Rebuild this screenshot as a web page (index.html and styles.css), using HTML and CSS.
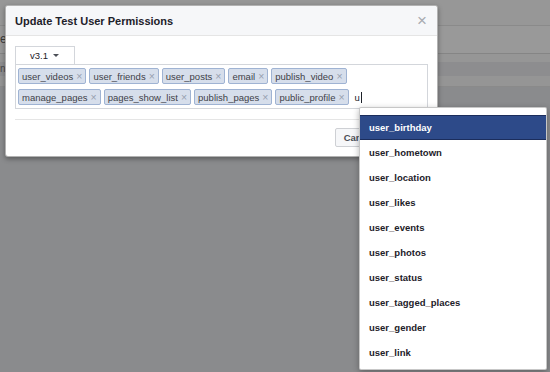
FILE: index.html
```html
<!DOCTYPE html>
<html>
<head>
<meta charset="utf-8">
<link rel="stylesheet" href="styles.css">
</head>
<body>
<div class="page">
  <div class="band b1"></div>
  <div class="band b2"><span class="peek">e</span></div>
  <div class="band b3"></div>
  <div class="band b4"><span class="peek small">n</span></div>
  <div class="band b5"></div>
  <div class="rest"></div>
</div>

<div class="dialog">
  <div class="dlg-head">
    <span class="title">Update Test User Permissions</span>
    <span class="close">×</span>
  </div>
  <div class="dlg-body">
    <div class="tabs"><div class="tab">v3.1<span class="caret"></span></div></div>
    <div class="tokenbox">
      <span class="tok">user_videos<span class="x">×</span></span>
      <span class="tok">user_friends<span class="x">×</span></span>
      <span class="tok">user_posts<span class="x">×</span></span>
      <span class="tok">email<span class="x">×</span></span>
      <span class="tok">publish_video<span class="x">×</span></span>
      <span class="tok">manage_pages<span class="x">×</span></span>
      <span class="tok">pages_show_list<span class="x">×</span></span>
      <span class="tok">publish_pages<span class="x">×</span></span>
      <span class="tok">public_profile<span class="x">×</span></span>
      <span class="typed">u</span><span class="cursor"></span>
    </div>
  </div>
  <div class="dlg-foot">
    <button class="btn">Cancel</button>
    <button class="btn primary">Save</button>
  </div>
</div>

<ul class="menu">
  <li class="item active">user_birthday</li>
  <li class="item">user_hometown</li>
  <li class="item">user_location</li>
  <li class="item">user_likes</li>
  <li class="item">user_events</li>
  <li class="item">user_photos</li>
  <li class="item">user_status</li>
  <li class="item">user_tagged_places</li>
  <li class="item">user_gender</li>
  <li class="item">user_link</li>
</ul>
</body>
</html>
```

FILE: styles.css
```css
* { box-sizing: border-box; }
html, body { margin: 0; padding: 0; }
body {
  width: 550px;
  height: 372px;
  overflow: hidden;
  background: #8a8b8d;
  font-family: "Liberation Sans", Arial, Helvetica, sans-serif;
  position: relative;
}

/* dimmed page behind the modal */
.page { display: flex; flex-direction: column; height: 372px; }
.band { position: relative; }
.b1 { height: 26px; background: #979797; border-bottom: 1px solid #8a8a8a; }
.b2 { height: 28px; background: #999999; border-bottom: 1px solid #858585; }
.b3 { height: 8px; background: #969696; }
.b4 { height: 14px; background: #8d8d8f; }
.b5 { height: 11px; background: #959595; border-bottom: 1px solid #8a8a8a; }
.rest { flex: 1; background: #8a8b8d; }
.peek {
  display: block;
  font-size: 12px;
  line-height: 26px;
  color: #3a3a3a;
}
.peek.small { font-size: 10px; line-height: 14px; color: #4a4a4a; }

/* modal dialog */
.dialog {
  position: absolute;
  left: 5px;
  top: 5px;
  width: 433px;
  background: #fff;
  border: 1px solid rgba(0, 0, 0, 0.3);
  border-radius: 3px;
  box-shadow: 0 2px 5px rgba(0, 0, 0, 0.35);
}
.dlg-head {
  height: 30px;
  display: flex;
  align-items: center;
  justify-content: space-between;
  padding: 0 10px 0 9px;
  background: #f6f7f9;
  border-bottom: 1px solid #e5e5e5;
  border-radius: 3px 3px 0 0;
}
.title { font-size: 11px; font-weight: bold; color: #1d2129; }
.close { font-size: 17px; line-height: 17px; color: #a8abb0; }

.dlg-body { padding: 10px 9px 10px 9px; }
.tabs { display: flex; }
.tab {
  display: flex;
  align-items: center;
  height: 18px;
  padding: 0 15px 0 14px;
  border: 1px solid #d3d6db;
  border-bottom: none;
  background: #fff;
  font-size: 9.5px;
  color: #1d2129;
}
.caret {
  width: 0;
  height: 0;
  margin-left: 5px;
  border-left: 3px solid transparent;
  border-right: 3px solid transparent;
  border-top: 3px solid #4b4f56;
}

.tokenbox {
  display: flex;
  flex-wrap: wrap;
  align-items: center;
  gap: 5px 3px;
  width: 413px;
  padding: 3px 2px;
  border: 1px solid #d3d6db;
}
.tok {
  display: flex;
  align-items: center;
  height: 16px;
  padding: 0 3px;
  background: #d6deeb;
  border: 1px solid #9fb3d3;
  border-radius: 2px;
  font-size: 9.5px;
  color: #3e4148;
}
.x { margin-left: 3px; font-size: 10.5px; line-height: 10px; color: #97a0b0; }
.typed { margin-left: 3px; font-size: 9.5px; color: #1d2129; }
.cursor { width: 1px; height: 11px; margin-left: -2px; background: #1d2129; }

.dlg-foot {
  display: flex;
  justify-content: flex-end;
  gap: 4px;
  margin: 0 9px;
  padding: 8px 0 9px;
  border-top: 1px solid #e5e5e5;
}
.btn {
  height: 19px;
  padding: 0 8px;
  font-family: inherit;
  font-size: 9.5px;
  font-weight: bold;
  color: #4b4f56;
  background: #f6f7f9;
  border: 1px solid #ced0d4;
  border-radius: 2px;
}
.btn.primary { background: #4267b2; border-color: #4267b2; color: #fff; }

/* autocomplete menu */
.menu {
  position: absolute;
  left: 359px;
  top: 107px;
  width: 188px;
  margin: 0;
  padding: 7px 0 4px;
  list-style: none;
  background: #fff;
  border: 1px solid rgba(0, 0, 0, 0.22);
  border-radius: 2px;
  box-shadow: 0 2px 6px rgba(0, 0, 0, 0.3);
}
.item {
  height: 25px;
  line-height: 26px;
  padding-left: 9px;
  font-size: 9.5px;
  font-weight: bold;
  color: #1d2129;
}
.item.active {
  background: #2d4a89;
  color: #fff;
  box-shadow: inset 0 1px 0 #1b2d5c, inset 0 -1px 0 #1b2d5c;
}
```
